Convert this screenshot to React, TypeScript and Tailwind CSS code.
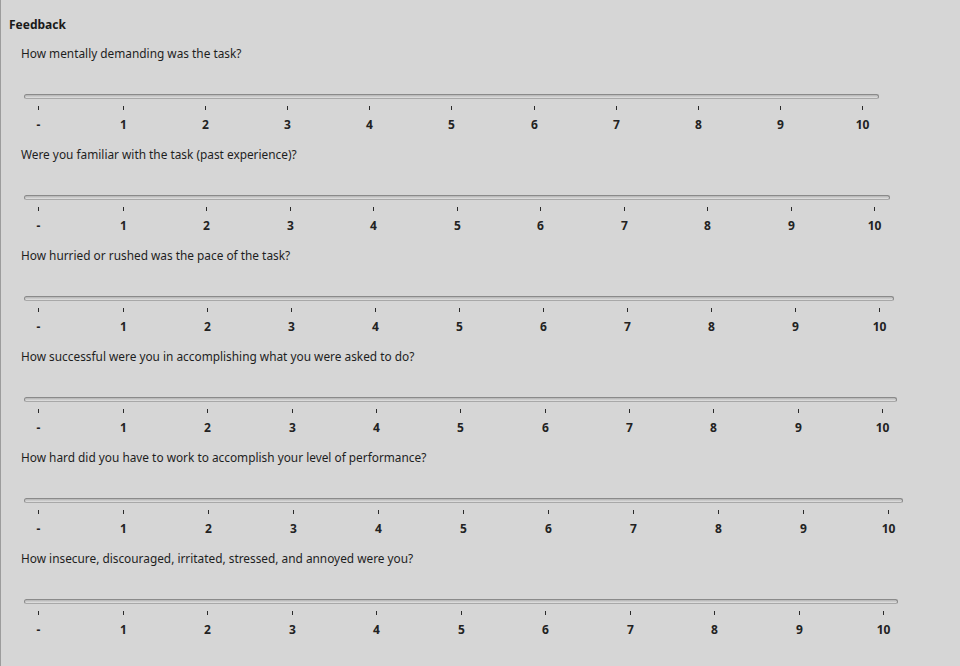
import React from 'react'

type Question = {
  text: string
  trackEnd: number
  lastTick: number
}

const questions: Question[] = [
  { text: 'How mentally demanding was the task?', trackEnd: 879, lastTick: 862 },
  { text: 'Were you familiar with the task (past experience)?', trackEnd: 890, lastTick: 874 },
  { text: 'How hurried or rushed was the pace of the task?', trackEnd: 894, lastTick: 879 },
  { text: 'How successful were you in accomplishing what you were asked to do?', trackEnd: 897, lastTick: 882 },
  { text: 'How hard did you have to work to accomplish your level of performance?', trackEnd: 903, lastTick: 888 },
  { text: 'How insecure, discouraged, irritated, stressed, and annoyed were you?', trackEnd: 898, lastTick: 883 },
]

const labels = ['-', '1', '2', '3', '4', '5', '6', '7', '8', '9', '10']

const TRACK_LEFT = 24

function tickPositions(lastTick: number) {
  // first tick ("-") sits apart, 1..10 are evenly spread
  const step = (lastTick - 123) / 9
  return labels.map((_, i) => (i === 0 ? 38 : 123 + (i - 1) * step) - TRACK_LEFT)
}

function Slider({ q, index }: { q: Question; index: number }) {
  const ticks = tickPositions(q.lastTick)
  const width = q.trackEnd - TRACK_LEFT
  return (
    <div className={index === 0 ? 'mt-[13px]' : 'mt-[14px]'}>
      <div className="pl-[20px] h-[16px] leading-[16px] text-[11.85px] text-[#1e1e1e]">{q.text}</div>
      <div className="ml-[23px] mt-[33px]" style={{ width }}>
        <div className="h-[5px] rounded-full border border-[#8a8a8a] border-b-[#a8a8a8] bg-gradient-to-b from-[#b4b4b4] to-[#e2e2e2]" />
        <div className="relative h-[4px] mt-[7px]">
          {ticks.map((x, i) => (
            <div key={i} className="absolute top-0 w-px h-[4px] bg-[#2a2a2a]" style={{ left: Math.round(x) }} />
          ))}
        </div>
        <div className="relative h-[14px] mt-[8px]">
          {ticks.map((x, i) => (
            <span
              key={i}
              className="absolute top-0 -translate-x-1/2 leading-[14px] text-[12px] font-bold text-[#222]"
              style={{ left: Math.round(x) + 0.5 }}
            >
              {labels[i]}
            </span>
          ))}
        </div>
      </div>
    </div>
  )
}

export default function App() {
  return (
    <div className="w-[960px] h-[666px] overflow-hidden bg-[#d6d6d6] border-l border-[#9c9c9c] font-['Noto_Sans',sans-serif]">
      <div className="pt-[17px] pl-[8px] h-[32px] leading-[16px] text-[12px] font-bold text-[#1a1a1a]">Feedback</div>
      {questions.map((q, i) => (
        <Slider key={i} q={q} index={i} />
      ))}
    </div>
  )
}
